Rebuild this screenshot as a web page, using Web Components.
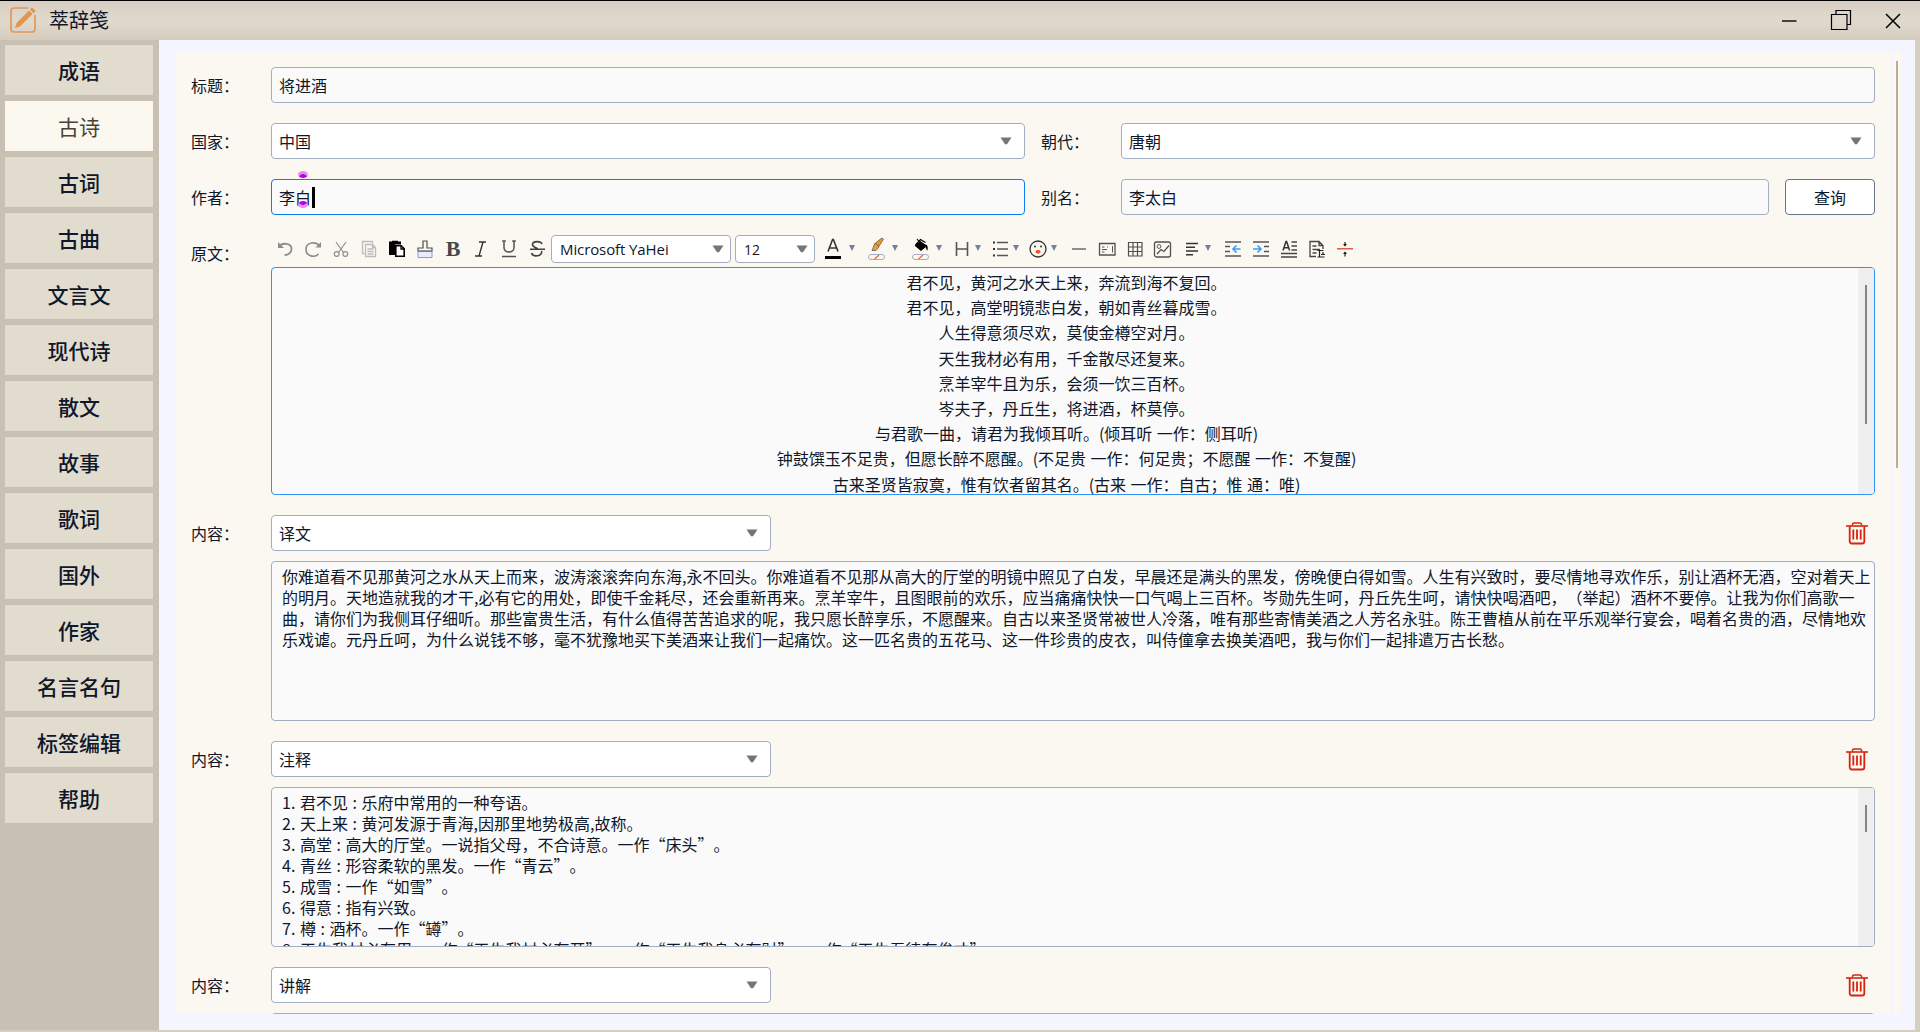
<!DOCTYPE html>
<html lang="zh-CN">
<head>
<meta charset="UTF-8">
<title>萃辞笺</title>
<style>
    html, body {
        margin: 0;
        height: 100%;
        overflow: hidden;
    }
    body {
        font-family: "Noto Sans CJK SC", "Open Sans", sans-serif;
        font-size: 16px;
        color: #0f172a;
        text-spacing-trim: space-all;
    }
</style>
</head>
<body>
<app-ventana></app-ventana>

<script>
// Trazos de cada icono, en una caja de 22x22
const ICONOS = {
    undo: `<path d="M5 8.500C8 4.500 17.500 4.500 17.500 11c0 3-2.500 6-7 6.200" stroke="#8c8c8c" stroke-width="1.800"/><path d="M4 4v6h6z" fill="#8c8c8c"/>`,
    redo: `<path d="M17.500 8C14 3 4 4 4 11.500c0 7 9 8.500 12.500 4.500" stroke="#8c8c8c" stroke-width="1.600"/><path d="M19 4v5.500h-5.500z" fill="#8c8c8c"/>`,
    cut: `<g stroke="#909090" stroke-width="1.200"><path d="M6 4l7.500 10.500M16 4L8.500 14.500"/><circle cx="6.700" cy="16" r="2.400"/><circle cx="15.300" cy="16" r="2.400"/></g>`,
    copy: `<g stroke="#bcbcbc" stroke-width="1.300"><path d="M6.500 15.500h-2v-12h10v2"/><path d="M7.500 6.500h7l3 3v9h-10zM14.500 6.500v3h3M9.500 11h6M9.500 13.500h6M9.500 16h6"/></g>`,
    paste: `<path d="M3 3.500h3V2.800h6v.7h3v3H9V17H3z" fill="#000"/><path d="M9.800 7.800h5.400l3 3v7.400H9.800z" fill="#fff" stroke="#000" stroke-width="1.600"/><path d="M15 7.500v3.500h3.500" stroke="#000" stroke-width="1.300"/>`,
    brush: `<path d="M4 13.500h14v6H4z" fill="#e8ebff" stroke="#8e99e0"/><path d="M4 13v-3h5V3h4v7h5v3z" fill="#fbf8f1" stroke="#505050" stroke-width="1.200"/><path d="M4 13h14" stroke="#888"/>`,
    strike: `<path d="M16 6c-1-3-9-3.400-9.500.3C6.200 9 10 9.600 11.500 10.800M4 11.200h15M15.500 13c1.500 5.500-8.500 6.600-10 2" stroke="#404040" stroke-width="1.600"/>`,
    italic: `<path d="M9 4h7M5 18h7M13 4l-4 14" stroke="#333" stroke-width="1.400"/>`,
    underline: `<path d="M6 3v6.500c0 6 10 6 10 0V3M4.200 3h3.600M14.200 3h3.600M4 18.500h14" stroke="#505050" stroke-width="1.500"/>`,
    color: `<path d="M6 13.500L10.600 1.500h.8L16 13.500M7.500 10h7" stroke="#333" stroke-width="1.600"/><path d="M3 19.500h16" stroke="#000" stroke-width="3"/>`,
    pincel: `<path d="M10.500 5l3-2.500L17 0l1.500 1.200L16 5l-2.500 4z" fill="#e89a28" stroke="#6b5340" stroke-width=".8"/><path d="M10 5l4 4-3 3.500H7z" fill="#dfa14a" stroke="#7c5a35" stroke-width=".8"/><rect x="3.500" y="16.500" width="16" height="5" rx="2.500" stroke="#a3adc2"/><path d="M9.500 21l4.500-4" stroke="#f3663c" stroke-width="1.300"/>`,
    cubo: `<path d="M6 7.500l5.500-4 6 4.500-5.500 4.500z" fill="#000" stroke="#000"/><path d="M8 1l4 5M6.500 7l5-5.500 5 3" stroke="#000" stroke-width="1.200"/><path d="M16.500 6c2.500 2 2.500 3 2 6.500-2-1-1.500-3.500-2-6.500z" fill="#000"/><rect x="3.500" y="16.500" width="16" height="5" rx="2.500" stroke="#a3adc2"/><path d="M9.500 21l4.500-4" stroke="#f3663c" stroke-width="1.300"/>`,
    titulo: `<path d="M5.500 4v14M16.500 4v14M5.500 11h11" stroke="#555" stroke-width="1.600"/>`,
    lista: `<path d="M8 4.500h11M8 11h11M8 17.500h11" stroke="#555" stroke-width="1.400"/><path d="M4 4.500h2M4 11h2M4 17.500h2" stroke="#333" stroke-width="2"/>`,
    emoji: `<circle cx="11" cy="11" r="8" stroke="#333" stroke-width="1.300"/><circle cx="8" cy="8.500" r="1" fill="#333"/><circle cx="14" cy="8.500" r="1" fill="#333"/><rect x="8.600" y="12" width="5" height="3.500" rx="1.700" fill="#f4511e"/>`,
    linea: `<path d="M4 11h14" stroke="#606060" stroke-width="1.400"/>`,
    tarjeta: `<path d="M3.500 5.500h15.500v11.500H3.500z" stroke="#505050" stroke-width="1.300"/><path d="M6 9h2.500M6 11.500h5M6 14h2.500M16.500 8v6.500M11 9h1" stroke="#555"/>`,
    tabla: `<path d="M4.500 4.500h13.500v13.500H4.500zM9 4.500v13.500M13.500 4.500v13.500M4.500 9H18M4.500 13.500H18" stroke="#505050" stroke-width="1.200"/>`,
    imagen: `<rect x="2.500" y="4" width="16" height="15" rx="2" stroke="#505050" stroke-width="1.300"/><circle cx="7" cy="8.500" r="1.900" stroke="#555"/><path d="M5 16l4-4.500 3 2L17 7.500" stroke="#505050" stroke-width="1.300"/>`,
    alinear: `<path d="M5 5.500h12M5 9.300h9M5 13h12M5 16.700h7" stroke="#333" stroke-width="1.500"/>`,
    menos: `<path d="M3 4h16M3 18h16M3 8.500h5M3 13.500h5" stroke="#555" stroke-width="1.400"/><path d="M18.500 11h-7.500M14.500 7.500L11 11l3.500 3.500" stroke="#3d9eff" stroke-width="1.700"/>`,
    mas: `<path d="M3 4h16M3 18h16M14 8.500h5M14 13.500h5" stroke="#555" stroke-width="1.400"/><path d="M3 11h7.500M7.500 7.500L11 11l-3.500 3.500" stroke="#3d9eff" stroke-width="1.700"/>`,
    interlinea: `<path d="M5 12.500L8 3.500h.6l3 9M6 9.800h4.700" stroke="#333" stroke-width="1.500"/><path d="M13.500 4H19M13.500 8H19M13.500 12H19M3 15.500h16M3 19h16" stroke="#444" stroke-width="1.400"/>`,
    documento: `<path d="M10 18.500H4V3.500h9l4 4V11M13 3.500v4h4M6.500 8h4M6.500 11.500h7.500M6.500 15h4" stroke="#444" stroke-width="1.300"/><path d="M11.500 12.500h6M13.500 12.500V19M11.500 19h7M17 14v2.500M15 16.500h4" stroke="#222" stroke-width="1.200"/>`,
    dividir: `<path d="M3 10.800h16" stroke="#d3462f" stroke-width="1.300"/><path d="M11 4v4M11 14v4.500" stroke="#222" stroke-width="1.200"/><path d="M9 6h4L11 8.500zM9 16h4L11 13.500z" fill="#222"/>`
};

class BarraTitulo extends HTMLElement {
    constructor() {
        super();
        this.attachShadow({ mode: 'open' });
    }
    connectedCallback() {
        this.shadowRoot.innerHTML = `
            <style>
                :host {
                    display: flex;
                    align-items: center;
                    box-sizing: border-box;
                    height: 40px;
                    padding: 0 17px 2px 9px;
                    border-top: 1px solid #000;
                    background: linear-gradient(#d8cdc3, #dcd5c8 30%, #e0dacc 52%, #d5ccbe);
                }
                .nombre {
                    flex: 1;
                    margin-left: 12px;
                    font-size: 20px;
                    line-height: 36px;
                }
                .botones {
                    display: flex;
                    align-items: center;
                    gap: 31px;
                }
                svg {
                    display: block;
                    fill: none;
                }
            </style>
            <svg width="28" height="28" viewBox="0 0 28 28">
                <path d="M19.500 2H4.500A3 3 0 0 0 2 4.500v18.500A3 3 0 0 0 4.500 26h19a3 3 0 0 0 2.500-3V9" stroke="#e2975a" stroke-width="1.700"/>
                <path d="M6 22l1.500-5L20 4.500l3.500 3.500L11 20.500z" fill="#e2954e"/>
                <path d="M21 3.500l2-2 3.800 3.500-2.300 2.300z" fill="#e2954e"/>
            </svg>
            <div class="nombre"><slot></slot></div>
            <div class="botones">
                <svg width="20" height="22"><path d="M3 12h14.500" stroke="#333" stroke-width="1.800"/></svg>
                <svg width="22" height="22"><path d="M1.500 5.500h15.500v15H1.500zM6 5V1.500h14.500v14H17.500" stroke="#000" stroke-width="1.200"/></svg>
                <svg width="20" height="22"><path d="M3 5l14 14M17 5L3 19" stroke="#000" stroke-width="1.500"/></svg>
            </div>
        `;
    }
}
customElements.define('barra-titulo', BarraTitulo);

class MenuLateral extends HTMLElement {
    constructor() {
        super();
        this.attachShadow({ mode: 'open' });
    }
    connectedCallback() {
        const secciones = ["成语", "古诗", "古词", "古曲", "文言文", "现代诗", "散文", "故事", "歌词", "国外", "作家", "名言名句", "标签编辑", "帮助"];
        const activa = this.getAttribute('activa');
        this.shadowRoot.innerHTML = `
            <style>
                :host {
                    display: flex;
                    flex-direction: column;
                    gap: 6px;
                    box-sizing: border-box;
                    width: 159px;
                    padding: 5px 6px 0 5px;
                    background: #c8c0b2;
                }
                .seccion {
                    height: 50px;
                    line-height: 50px;
                    text-align: center;
                    font-size: 21px;
                    font-weight: 500;
                    background: #e2dccf;
                }
                .activa {
                    font-weight: 400;
                    color: #4a4339;
                    background: #fbf8f0;
                }
            </style>
            ${secciones.map((s) => `<div class="seccion ${s === activa ? 'activa' : ''}">${s}</div>`).join('')}
        `;
    }
}
customElements.define('menu-lateral', MenuLateral);

// Fila del formulario: etiqueta a la izquierda y el contenido a la derecha
class FilaCampo extends HTMLElement {
    constructor() {
        super();
        this.attachShadow({ mode: 'open' });
    }
    connectedCallback() {
        this.shadowRoot.innerHTML = `
            <style>
                :host {
                    display: flex;
                    flex: 1;
                    min-width: 0;
                }
                .etiqueta {
                    flex: 0 0 80px;
                    height: 36px;
                    line-height: 36px;
                }
                .contenido {
                    flex: 1;
                    min-width: 0;
                }
            </style>
            <div class="etiqueta">${this.getAttribute('etiqueta')}</div>
            <div class="contenido"><slot></slot></div>
        `;
    }
}
customElements.define('fila-campo', FilaCampo);

class CampoTexto extends HTMLElement {
    constructor() {
        super();
        this.attachShadow({ mode: 'open' });
    }
    connectedCallback() {
        this.shadowRoot.innerHTML = `
            <style>
                :host {
                    display: flex;
                    align-items: center;
                    box-sizing: border-box;
                    height: 36px;
                    padding: 0 0 0 7px;
                    border: 1px solid #a3adc2;
                    border-radius: 4px;
                    background: #fafafa;
                }
                :host([foco]) {
                    border-color: #0a7df5;
                }
                .texto {
                    position: relative;
                    line-height: 24px;
                }
                .cursor {
                    position: absolute;
                    left: 33px;
                    top: 2px;
                    width: 3px;
                    height: 21px;
                    background: #000;
                }
                .marca {
                    position: absolute;
                    left: 19px;
                    width: 10px;
                    height: 7px;
                    border-radius: 50%;
                    background: radial-gradient(ellipse 4px 2.500px at 50% var(--y), #b800e6 85%, #e58af7);
                }
                .arriba { top: -14px; --y: 80%; }
                .abajo { top: 16px; --y: 20%; }
            </style>
            <div class="texto">
                <slot></slot>
                ${this.hasAttribute('foco') ? '<i class="marca arriba"></i><i class="marca abajo"></i><i class="cursor"></i>' : ''}
            </div>
        `;
    }
}
customElements.define('campo-texto', CampoTexto);

class ListaOpciones extends HTMLElement {
    constructor() {
        super();
        this.attachShadow({ mode: 'open' });
    }
    connectedCallback() {
        this.shadowRoot.innerHTML = `
            <style>
                :host {
                    display: flex;
                    align-items: center;
                    justify-content: space-between;
                    box-sizing: border-box;
                    height: 36px;
                    padding: 0 12px 0 7px;
                    border: 1px solid #a3adc2;
                    border-radius: 4px;
                    background: #fff;
                }
                :host([pequena]) {
                    height: 28px;
                    padding: 0 6px 0 8px;
                    font-size: 15px;
                    font-family: "Open Sans", sans-serif;
                    letter-spacing: -0.1px;
                }
                svg {
                    margin-top: -1px;
                }
            </style>
            <span><slot></slot></span>
            <svg width="12" height="8"><path d="M.5.500h11L7 7.200H5z" fill="#757575"/></svg>
        `;
    }
}
customElements.define('lista-opciones', ListaOpciones);

class AreaTexto extends HTMLElement {
    constructor() {
        super();
        this.attachShadow({ mode: 'open' });
    }
    connectedCallback() {
        const barra = this.getAttribute('barra');
        this.shadowRoot.innerHTML = `
            <style>
                :host {
                    display: flex;
                    box-sizing: border-box;
                    height: 160px;
                    border: 1px solid #a3adc2;
                    border-radius: 4px;
                    background: #fafafa;
                    overflow: hidden;
                    white-space: pre;
                    line-height: 21px;
                }
                :host([editor]) {
                    height: 228px;
                    border-color: #3092f8;
                    line-height: 25.200px;
                    text-align: center;
                    word-spacing: 0.800px;
                }
                .texto {
                    flex: 1;
                    min-width: 0;
                    padding: 4px 0 0 10px;
                }
                :host([editor]) .texto {
                    padding: 2px 0 0 3px;
                }
                .barra {
                    flex: 0 0 16px;
                    box-sizing: border-box;
                    padding: 17px 0 0 7px;
                    background: #efefef;
                }
                .barra div {
                    width: 2px;
                    background: #858585;
                }
            </style>
            <div class="texto"><slot></slot></div>
            ${barra ? `<div class="barra"><div style="height:${barra}px"></div></div>` : ''}
        `;
    }
}
customElements.define('area-texto', AreaTexto);

class BotonHerramienta extends HTMLElement {
    constructor() {
        super();
        this.attachShadow({ mode: 'open' });
    }
    connectedCallback() {
        const icono = this.getAttribute('icono');
        // La negrita es una letra, el resto son dibujos
        const dibujo = icono === 'negrita'
            ? '<b>B</b>'
            : `<svg width="22" height="22" viewBox="0 0 22 22">${ICONOS[icono]}</svg>`;
        this.shadowRoot.innerHTML = `
            <style>
                :host {
                    display: flex;
                    align-items: center;
                    flex: 0 0 28px;
                    height: 28px;
                }
                .icono {
                    flex: 0 0 28px;
                    display: flex;
                    justify-content: center;
                }
                svg {
                    display: block;
                    fill: none;
                    overflow: visible;
                }
                b {
                    font: bold 22px/26px "Liberation Serif", serif;
                    color: #484848;
                }
                .flecha {
                    border: 3px solid transparent;
                    border-top: 6px solid #71829d;
                    border-bottom: 0;
                    margin: -3px 0 0 -1px;
                }
                :host([ancho]) .flecha {
                    margin-left: 2px;
                }
            </style>
            <div class="icono">${dibujo}</div>
            ${this.hasAttribute('menu') ? '<div class="flecha"></div>' : ''}
        `;
    }
}
customElements.define('boton-herramienta', BotonHerramienta);

class BarraHerramientas extends HTMLElement {
    constructor() {
        super();
        this.attachShadow({ mode: 'open' });
    }
    connectedCallback() {
        const basicas = ['undo', 'redo', 'cut', 'copy', 'paste', 'brush', 'negrita', 'italic', 'underline', 'strike'];
        // [icono, ancho, atributos]
        const formato = [
            ['color', 43, 'menu ancho'],
            ['pincel', 44, 'menu ancho'],
            ['cubo', 42, 'menu ancho'],
            ['titulo', 38, 'menu'],
            ['lista', 38, 'menu'],
            ['emoji', 41, 'menu'],
            ['linea', 28, ''],
            ['tarjeta', 28, ''],
            ['tabla', 28, ''],
            ['imagen', 29, ''],
            ['alinear', 41, 'menu'],
            ['menos', 28, ''],
            ['mas', 28, ''],
            ['interlinea', 28, ''],
            ['documento', 28, ''],
            ['dividir', 28, '']
        ];
        this.shadowRoot.innerHTML = `
            <style>
                :host {
                    display: flex;
                    height: 28px;
                    margin-bottom: 4px;
                }
                .fuente {
                    flex: 0 0 180px;
                    margin-right: 4px;
                }
                .medida {
                    flex: 0 0 80px;
                    margin-right: 4px;
                    font-size: 14px;
                }
            </style>
            ${basicas.map((i) => `<boton-herramienta icono="${i}"></boton-herramienta>`).join('')}
            <lista-opciones class="fuente" pequena>Microsoft YaHei</lista-opciones>
            <lista-opciones class="medida" pequena>12</lista-opciones>
            ${formato.map(([i, ancho, extra]) => `<boton-herramienta icono="${i}" ${extra} style="flex-basis:${ancho}px"></boton-herramienta>`).join('')}
        `;
    }
}
customElements.define('barra-herramientas', BarraHerramientas);

// Bloque de contenido con su tipo y el boton para borrarlo
class BloqueContenido extends HTMLElement {
    constructor() {
        super();
        this.attachShadow({ mode: 'open' });
    }
    connectedCallback() {
        const barra = this.getAttribute('barra') || '';
        this.shadowRoot.innerHTML = `
            <style>
                :host {
                    display: block;
                }
                .cabecera {
                    display: flex;
                    align-items: center;
                    justify-content: space-between;
                    padding-right: 7px;
                    margin-bottom: 10px;
                }
                lista-opciones {
                    width: 500px;
                }
                svg {
                    fill: none;
                    stroke: #d8240f;
                }
            </style>
            <fila-campo etiqueta="内容：">
                <div class="cabecera">
                    <lista-opciones>${this.getAttribute('tipo')}</lista-opciones>
                    <svg width="22" height="24" viewBox="0 0 22 24">
                        <path d="M0 5h22" stroke-width="1.600"/>
                        <path d="M6.500 4.500V3.500a1.500 1.500 0 0 1 1.500-1.500h6a1.500 1.500 0 0 1 1.500 1.500v1" stroke-width="1.500"/>
                        <path d="M3.700 5v15.500a2 2 0 0 0 2 2h10.600a2 2 0 0 0 2-2V5" stroke-width="1.800"/>
                        <path d="M7.300 8.500v10M11 8.500v10M14.700 8.500v10" stroke-width="1.800"/>
                    </svg>
                </div>
                <area-texto ${barra ? `barra="${barra}"` : ''}><slot></slot></area-texto>
            </fila-campo>
        `;
    }
}
customElements.define('bloque-contenido', BloqueContenido);

class FormularioPoema extends HTMLElement {
    constructor() {
        super();
        this.attachShadow({ mode: 'open' });
    }
    connectedCallback() {
        const versos = [
            "君不见，黄河之水天上来，奔流到海不复回。",
            "君不见，高堂明镜悲白发，朝如青丝暮成雪。",
            "人生得意须尽欢，莫使金樽空对月。",
            "天生我材必有用，千金散尽还复来。",
            "烹羊宰牛且为乐，会须一饮三百杯。",
            "岑夫子，丹丘生，将进酒，杯莫停。",
            "与君歌一曲，请君为我倾耳听。(倾耳听 一作：侧耳听)",
            "钟鼓馔玉不足贵，但愿长醉不愿醒。(不足贵 一作：何足贵；不愿醒 一作：不复醒)",
            "古来圣贤皆寂寞，惟有饮者留其名。(古来 一作：自古；惟 通：唯)"
        ];
        const traduccion = [
            "你难道看不见那黄河之水从天上而来，波涛滚滚奔向东海,永不回头。你难道看不见那从高大的厅堂的明镜中照见了白发，早晨还是满头的黑发，傍晚便白得如雪。人生有兴致时，要尽情地寻欢作乐，别让酒杯无酒，空对着天上",
            "的明月。天地造就我的才干,必有它的用处，即使千金耗尽，还会重新再来。烹羊宰牛，且图眼前的欢乐，应当痛痛快快一口气喝上三百杯。岑勋先生呵，丹丘先生呵，请快快喝酒吧，（举起）酒杯不要停。让我为你们高歌一",
            "曲，请你们为我侧耳仔细听。那些富贵生活，有什么值得苦苦追求的呢，我只愿长醉享乐，不愿醒来。自古以来圣贤常被世人冷落，唯有那些寄情美酒之人芳名永驻。陈王曹植从前在平乐观举行宴会，喝着名贵的酒，尽情地欢",
            "乐戏谑。元丹丘呵，为什么说钱不够，毫不犹豫地买下美酒来让我们一起痛饮。这一匹名贵的五花马、这一件珍贵的皮衣，叫侍僮拿去换美酒吧，我与你们一起排遣万古长愁。"
        ];
        const notas = [
            "1. 君不见 : 乐府中常用的一种夸语。",
            "2. 天上来 : 黄河发源于青海,因那里地势极高,故称。",
            "3. 高堂 : 高大的厅堂。一说指父母，不合诗意。一作“床头”。",
            "4. 青丝 : 形容柔软的黑发。一作“青云”。",
            "5. 成雪 : 一作“如雪”。",
            "6. 得意 : 指有兴致。",
            "7. 樽 : 酒杯。一作“罇”。",
            "8. 天生我材必有用 : 一作“天生我材必有开”，一作“天生我身必有财”，一作“天生吾徒有俊才”。"
        ];
        this.shadowRoot.innerHTML = `
            <style>
                :host {
                    display: flex;
                    flex: 1;
                    min-width: 0;
                    box-sizing: border-box;
                    padding: 11px 14px 16px 16px;
                    background: #f4f5ff;
                }
                .panel {
                    flex: 1;
                    min-width: 0;
                    display: flex;
                    flex-direction: column;
                    gap: 20px;
                    padding: 16px 16px 0 16px;
                    background: #fbf8f1;
                    overflow: hidden;
                }
                .panel > * {
                    flex: none;
                }
                .scroll {
                    flex: 0 0 8px;
                    margin-left: 2px;
                    box-sizing: border-box;
                    padding: 10px 0 0 3px;
                    background: #fbf8f1;
                }
                .scroll div {
                    width: 2px;
                    height: 407px;
                    background: #b8ad9e;
                }
                .doble {
                    display: flex;
                    gap: 16px;
                }
                .busqueda {
                    display: flex;
                    gap: 16px;
                }
                .busqueda campo-texto {
                    flex: 1;
                }
                .consultar {
                    box-sizing: border-box;
                    width: 90px;
                    height: 36px;
                    border: 1px solid #64748b;
                    border-radius: 4px;
                    background: #fff;
                    text-align: center;
                    line-height: 34px;
                }
                .notas {
                    word-spacing: 1px;
                }
            </style>
            <div class="panel">
                <fila-campo etiqueta="标题："><campo-texto>将进酒</campo-texto></fila-campo>
                <div class="doble">
                    <fila-campo etiqueta="国家："><lista-opciones>中国</lista-opciones></fila-campo>
                    <fila-campo etiqueta="朝代："><lista-opciones>唐朝</lista-opciones></fila-campo>
                </div>
                <div class="doble">
                    <fila-campo etiqueta="作者："><campo-texto foco>李白</campo-texto></fila-campo>
                    <fila-campo etiqueta="别名：">
                        <div class="busqueda">
                            <campo-texto>李太白</campo-texto>
                            <div class="consultar">查询</div>
                        </div>
                    </fila-campo>
                </div>
                <fila-campo etiqueta="原文：">
                    <barra-herramientas></barra-herramientas>
                    <area-texto editor barra="139">${versos.join('\n')}</area-texto>
                </fila-campo>
                <bloque-contenido tipo="译文">${traduccion.join('\n')}</bloque-contenido>
                <bloque-contenido tipo="注释" barra="27" class="notas">${notas.join('\n')}</bloque-contenido>
                <bloque-contenido tipo="讲解" barra="27"></bloque-contenido>
            </div>
            <div class="scroll"><div></div></div>
        `;
    }
}
customElements.define('formulario-poema', FormularioPoema);

class AppVentana extends HTMLElement {
    constructor() {
        super();
        this.attachShadow({ mode: 'open' });
    }
    connectedCallback() {
        this.shadowRoot.innerHTML = `
            <style>
                :host {
                    display: flex;
                    flex-direction: column;
                    height: 100vh;
                    background: #d6cec0;
                }
                .cuerpo {
                    flex: 1;
                    min-height: 0;
                    display: flex;
                    padding: 0 5px 2px 0;
                }
            </style>
            <barra-titulo>萃辞笺</barra-titulo>
            <div class="cuerpo">
                <menu-lateral activa="古诗"></menu-lateral>
                <formulario-poema></formulario-poema>
            </div>
        `;
    }
}
customElements.define('app-ventana', AppVentana);
</script>
</body>
</html>
